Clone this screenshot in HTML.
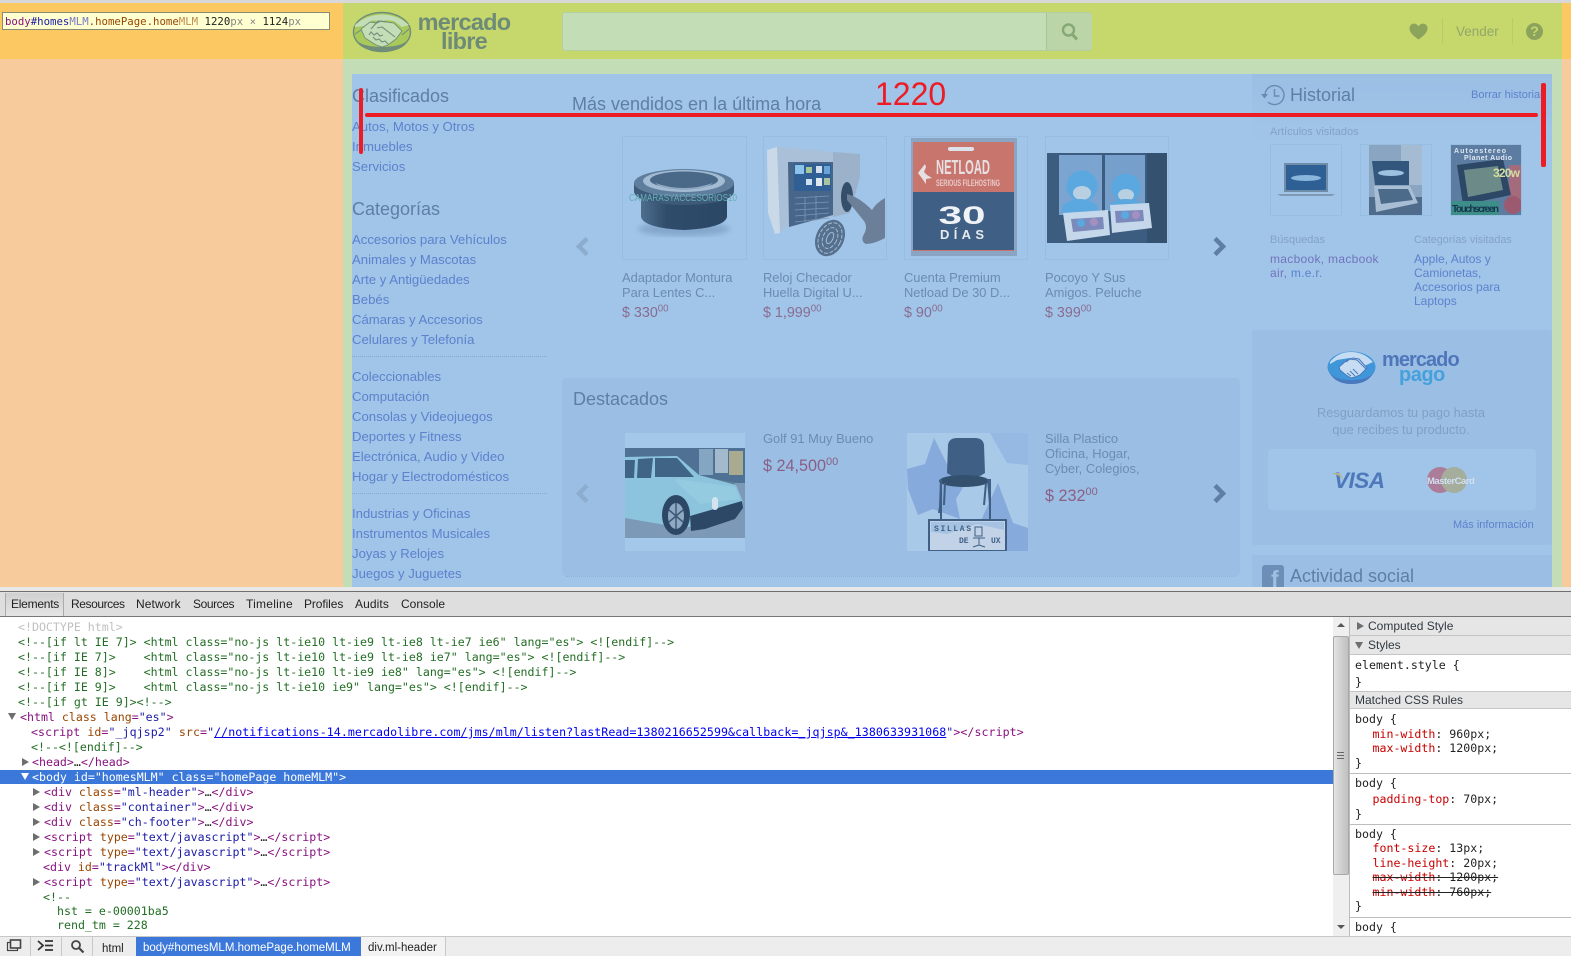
<!DOCTYPE html>
<html lang="es">
<head>
<meta charset="utf-8">
<title>Mercado Libre inspector</title>
<style>
html,body{margin:0;padding:0;width:1571px;height:956px;overflow:hidden;background:#fff}
body{position:relative;font-family:"Liberation Sans",Arial,sans-serif}
div,span.a,svg.a{position:absolute}
.x{white-space:nowrap}
.l{position:absolute;left:352px;margin-top:1px;font-size:13.150px;line-height:20px;color:#5d81cd;white-space:nowrap}
.h{position:absolute;font-size:18px;line-height:22px;color:#5f7ea6;white-space:nowrap}
.box{position:absolute;border:1px solid #97bde0;box-sizing:border-box}
.ti{position:absolute;font-size:12.900px;line-height:15px;color:#6c8bb3;white-space:nowrap}
.pr{position:absolute;font-size:14.300px;line-height:16px;color:#8a6c92;white-space:nowrap}
.pb{position:absolute;font-size:16.200px;line-height:20px;color:#8a5e85;white-space:nowrap}
sup{font-size:.68em;line-height:0;vertical-align:.55em}
.sm{position:absolute;font-size:11px;line-height:13px;color:#84a2c6;white-space:nowrap}
.lk{position:absolute;font-size:12px;line-height:14px;color:#5d81cd;white-space:nowrap}
.code{position:absolute;font-family:"DejaVu Sans Mono","Liberation Mono",monospace;font-size:11.600px;line-height:15px;white-space:pre;color:#222}
.c{color:#236e25}.t{color:#881280}.n{color:#994500}.v{color:#1a1aa6}.g{color:#c0c0c0}
.tab{position:absolute;top:597px;font-size:12px;line-height:15px;color:#222;white-space:nowrap}
.sec{position:absolute;left:1350px;width:221px;background:#e6e6e6;border-bottom:1px solid #c4c4c4;box-sizing:border-box;font-size:12px;color:#303942}
.css{position:absolute;left:1355px;font-family:"DejaVu Sans Mono","Liberation Mono",monospace;font-size:11.600px;line-height:15px;color:#222;white-space:pre}
.i{display:inline-block;width:17.500px}
.r{color:#c80000}
.sep{position:absolute;left:1350px;width:221px;height:1px;background:#bdbdbd}
.tri{position:absolute;width:0;height:0}
.ar{border-top:4px solid transparent;border-bottom:4px solid transparent;border-left:7px solid #6e6e6e}
</style>
</head>
<body>
<!-- page backdrop -->
<div style="left:0;top:0;width:1571px;height:3px;background:#d8d8d8"></div>
<div style="left:0;top:3px;width:343px;height:56px;background:#fbc862"></div>
<div style="left:0;top:59px;width:343px;height:528px;background:#f8cb9d"></div>
<div style="left:343px;top:3px;width:1219px;height:56px;background:#c6d76b"></div>
<div style="left:1562px;top:3px;width:9px;height:56px;background:#fbc862"></div>
<div style="left:1562px;top:59px;width:9px;height:528px;background:#f8cb9d"></div>
<div style="left:343px;top:59px;width:1219px;height:528px;background:#c3deb6"></div>
<div style="left:352px;top:74px;width:1200px;height:513px;background:#a0c5e8"></div>

<!-- inspector tip -->
<div class="x" style="left:2px;top:12px;width:328px;height:18px;box-sizing:border-box;background:#ffffd0;border:1px solid #8a8a78;font-family:'DejaVu Sans Mono',monospace;font-size:10.700px;line-height:17px;padding-left:2px;color:#222"><span style="color:#881280">body</span><span style="color:#1a1aa6">#homes</span><span style="color:#7a7ac0">MLM</span><span style="color:#994500">.homePage.home</span><span style="color:#c08a50">MLM</span> 1220<span style="color:#888">px × </span>1124<span style="color:#888">px</span></div>

<!-- mercado libre logo -->
<svg class="a" style="left:352px;top:10px" width="62" height="44" viewBox="0 0 62 44">
<ellipse cx="30" cy="22" rx="28.500" ry="19.500" fill="#a9c95a" stroke="#6f8d78" stroke-width="1.400"/>
<path d="M1.500 24q3 17 28.500 17.500T58.500 24q-2 13-28.500 13T1.500 24z" fill="#6f8d78"/>
<path d="M3 15Q14 5 30 4.500 46 5 57 15l-7 2-8-6-8-1-6 2-7-2-9 6-9 1z" fill="#c3deb6"/>
<path d="M9 19l9-7 7 1 4-2 6 1 7 1 8 8-6 8-8 6-6 2-6-2-11-7z" fill="#c3deb6" stroke="#6f8d78" stroke-width=".9"/>
<path d="M19 19l7-8 8 1M25 18l5-1 13 10M21 27l3 3 3-1 3 3 3-1 3 3M17 25l2-3 3 3 3-2 3 3 3-1" fill="none" stroke="#6f8d78" stroke-width="1.100"/>
<path d="M3 24l6-4M57 19l-7 6" stroke="#6f8d78" stroke-width="1"/>
</svg>
<div class="x" style="left:417px;top:13px;width:94px;text-align:center;font-size:23.500px;font-weight:bold;line-height:19px;letter-spacing:-.75px;color:#6e8b78">mercado<br>libre</div>

<!-- search -->
<div style="left:562px;top:12px;width:530px;height:39px;box-sizing:border-box;background:#c3deb6;border:1px solid #b3cf9f;border-radius:3px"></div>
<div style="left:1046px;top:13px;width:45px;height:37px;background:#bbd5a8;border-left:1px solid #aac596;border-radius:0 2px 2px 0"></div>
<svg class="a" style="left:1061px;top:22px" width="18" height="19" viewBox="0 0 18 19"><circle cx="7.500" cy="8" r="5.500" fill="none" stroke="#86a875" stroke-width="2.400"/><path d="M11.500 12.500l4.500 5" stroke="#86a875" stroke-width="3"/></svg>

<!-- header right -->
<svg class="a" style="left:1409px;top:23px" width="19" height="17" viewBox="0 0 19 17"><path d="M9.500 16.500C5 13 .5 10 .5 5.200.5 2.500 2.500.6 5 .6c2 0 3.500 1 4.500 2.800C10.500 1.600 12 .6 14 .6c2.500 0 4.500 1.900 4.500 4.600 0 4.800-4.500 7.800-9 11.300z" fill="#8ca35c"/></svg>
<div style="left:1442px;top:18px;width:1px;height:26px;background:#b9cc6c"></div>
<div class="x" style="left:1456px;top:24px;font-size:13.500px;line-height:16px;color:#93a76b">Vender</div>
<div style="left:1512px;top:18px;width:1px;height:26px;background:#b9cc6c"></div>
<div style="left:1526px;top:23px;width:17px;height:17px;border-radius:50%;background:#8ca35c;color:#c6d76b;font-weight:bold;font-size:14px;line-height:17px;text-align:center">?</div>

<!-- left column -->
<div class="h" style="left:352px;top:85px">Clasificados</div>
<div class="l" style="top:116px">Autos, Motos y Otros</div>
<div class="l" style="top:136px">Inmuebles</div>
<div class="l" style="top:156px">Servicios</div>
<div class="h" style="left:352px;top:198px">Categorías</div>
<div class="l" style="top:229px">Accesorios para Vehículos</div>
<div class="l" style="top:249px">Animales y Mascotas</div>
<div class="l" style="top:269px">Arte y Antigüedades</div>
<div class="l" style="top:289px">Bebés</div>
<div class="l" style="top:309px">Cámaras y Accesorios</div>
<div class="l" style="top:329px">Celulares y Telefonía</div>
<div style="left:352px;top:356px;width:195px;border-top:1px dotted #86a9cd"></div>
<div class="l" style="top:366px">Coleccionables</div>
<div class="l" style="top:386px">Computación</div>
<div class="l" style="top:406px">Consolas y Videojuegos</div>
<div class="l" style="top:426px">Deportes y Fitness</div>
<div class="l" style="top:446px">Electrónica, Audio y Video</div>
<div class="l" style="top:466px">Hogar y Electrodomésticos</div>
<div style="left:352px;top:493px;width:195px;border-top:1px dotted #86a9cd"></div>
<div class="l" style="top:503px">Industrias y Oficinas</div>
<div class="l" style="top:523px">Instrumentos Musicales</div>
<div class="l" style="top:543px">Joyas y Relojes</div>
<div class="l" style="top:563px">Juegos y Juguetes</div>

<!-- más vendidos -->
<div class="h" style="left:572px;top:93px;color:#5f7ea6">Más vendidos en la última hora</div>
<div class="box" style="left:622px;top:136px;width:125px;height:124px"></div>
<div class="box" style="left:763px;top:136px;width:124px;height:124px"></div>
<div class="box" style="left:904px;top:136px;width:124px;height:124px"></div>
<div class="box" style="left:1045px;top:136px;width:124px;height:124px"></div>

<!-- lens -->
<svg class="a" style="left:623px;top:137px" width="122" height="122" viewBox="0 0 122 122">
<defs><filter id="bl"><feGaussianBlur stdDeviation="3"/></filter>
<linearGradient id="lg" x1="0" x2="1" y1="0" y2="0"><stop offset="0" stop-color="#4f6e8e"/><stop offset=".3" stop-color="#2f4c6b"/><stop offset="1" stop-color="#2b4766"/></linearGradient></defs>
<ellipse cx="61" cy="92" rx="46" ry="7" fill="#7d9fc4" filter="url(#bl)" opacity=".8"/>
<path d="M18 56v24q3 11 43 13 40-2 43-13V56z" fill="url(#lg)"/>
<path d="M11 46v9q3 12 50 13 47-1 50-13v-9z" fill="#3d5a79"/>
<ellipse cx="61" cy="46" rx="50" ry="14" fill="#5f7e9e"/>
<ellipse cx="61" cy="44" rx="41" ry="11" fill="#a3bbd3"/>
<ellipse cx="61" cy="43" rx="34" ry="8.500" fill="#4a6888"/>
<path d="M32 46q29 10 58 0-6 6-29 7-23-1-29-7z" fill="#8ea8c2"/>
<text x="6" y="64" font-family="Liberation Sans" font-size="10.500" fill="#66aeb6" textLength="108" lengthAdjust="spacingAndGlyphs">CAMARASYACCESORIOS10</text>
</svg>
<!-- clock -->
<svg class="a" style="left:764px;top:137px" width="122" height="122" viewBox="0 0 122 122">
<path d="M3 13l10-3 56 5 27 2v23L86 76 23 90 11 97 4 76z" fill="#a9c0d8"/>
<path d="M3 13l10-3 3 86-5 1-7-21z" fill="#cad9e8"/>
<path d="M69 15l27 2v23L86 76l-17 4z" fill="#9bb2ca"/>
<path d="M24 25h45v53L25 90z" fill="#48668a"/>
<rect x="30" y="27" width="37" height="27" fill="#2f5f95"/>
<rect x="31" y="28" width="9" height="9" fill="#8cc3ea"/><rect x="42" y="30" width="6" height="6" fill="#a7c99a"/><rect x="52" y="29" width="6" height="7" fill="#d5e0ef"/><rect x="60" y="29" width="6" height="8" fill="#6aa5d8"/><rect x="42" y="42" width="6" height="6" fill="#cfe0f0"/><rect x="52" y="41" width="6" height="8" fill="#dfe7ef"/><rect x="60" y="41" width="6" height="7" fill="#a9c5a0"/>
<path d="M31 61l34-2M31 67l34-2M31 73l34-2M31 79l34-3M31 85l34-4M41 60v26M52 59v25" stroke="#7a97b5" stroke-width=".8"/>
<ellipse cx="83" cy="60" rx="6" ry="15" fill="#354f6b"/>
<path d="M83 57Q95 60 108 73 112 66 121 61V101Q110 107 102 107 96 104 100 97 104 90 100 84 92 74 83 63z" fill="#6b7f99"/>
<g transform="rotate(25 66 101)"><ellipse cx="66" cy="101" rx="14" ry="19" fill="#55708e"/><ellipse cx="66" cy="101" rx="11" ry="16" fill="none" stroke="#a3bad2" stroke-width="1" stroke-dasharray="4 1.500"/><ellipse cx="66" cy="101" rx="7" ry="11" fill="none" stroke="#a3bad2" stroke-width="1" stroke-dasharray="4 1.500"/><ellipse cx="66" cy="101" rx="3" ry="6" fill="none" stroke="#a3bad2" stroke-width="1"/></g>
</svg>
<!-- netload -->
<svg class="a" style="left:908px;top:138px" width="112" height="119" viewBox="0 0 112 119">
<rect x="3" y="0" width="106" height="118" fill="#8aa5c3"/>
<rect x="5" y="4" width="101" height="109" fill="#c8756d"/>
<rect x="5" y="54" width="101" height="58" fill="#3f5f85"/>
<rect x="40" y="9" width="26" height="4" rx="2" fill="#dde3ea"/>
<path d="M17 26l-7 9 3 4 5 7v-5l6-1-5-3-3-3 2-5z" fill="#e7e0e2"/>
<text x="28" y="36" font-family="Liberation Sans" font-weight="bold" font-size="20" textLength="54" lengthAdjust="spacingAndGlyphs" fill="#e7e0e2">NETLOAD</text>
<text x="28" y="48" font-family="Liberation Sans" font-weight="bold" font-size="9" textLength="64" lengthAdjust="spacingAndGlyphs" fill="#e7c9c9">SERIOUS FILEHOSTING</text>
<text x="54" y="86" text-anchor="middle" font-family="Liberation Sans" font-weight="bold" font-size="25" fill="#f0f3f6" textLength="47" lengthAdjust="spacingAndGlyphs">30</text>
<text x="54" y="101" text-anchor="middle" font-family="Liberation Sans" font-weight="bold" font-size="13" fill="#e6ebf0" textLength="44">DÍAS</text>
</svg>
<!-- pocoyo -->
<svg class="a" style="left:1047px;top:153px" width="120" height="90" viewBox="0 0 120 90">
<rect width="120" height="90" fill="#3d5d80"/>
<rect x="100" y="0" width="20" height="90" fill="#34516f"/>
<rect x="12" y="2" width="43" height="60" fill="#7ba4d0"/><rect x="58" y="2" width="40" height="56" fill="#769fcb"/>
<circle cx="35" cy="33" r="15.500" fill="#5ba7df"/><circle cx="79" cy="35" r="14.500" fill="#5ba7df"/>
<ellipse cx="35" cy="40" rx="9" ry="7" fill="#b9cfe2"/><ellipse cx="79" cy="42" rx="8" ry="6" fill="#b9cfe2"/>
<ellipse cx="33" cy="57" rx="18" ry="11" fill="#5ba7df"/><ellipse cx="79" cy="55" rx="17" ry="9" fill="#5ba7df"/>
<path d="M16 60l45-3 2 25-43 6z" fill="#c5d7ea"/><path d="M63 52l39-2 3 25-40 5z" fill="#c5d7ea"/>
<path d="M24 66l32-2 1 12-31 3z" fill="#7b89bb"/><path d="M68 58l28-1 1 11-28 2z" fill="#7b89bb"/>
<circle cx="34" cy="70" r="4" fill="#5ba7df"/><circle cx="47" cy="69" r="4" fill="#a58fc0"/><circle cx="78" cy="62" r="4" fill="#5ba7df"/><circle cx="89" cy="62" r="4" fill="#a58fc0"/>
</svg>

<div class="ti" style="left:622px;top:270px">Adaptador Montura<br>Para Lentes C...</div>
<div class="pr" style="left:622px;top:305px">$ 330<sup>00</sup></div>
<div class="ti" style="left:763px;top:270px">Reloj Checador<br>Huella Digital U...</div>
<div class="pr" style="left:763px;top:305px">$ 1,999<sup>00</sup></div>
<div class="ti" style="left:904px;top:270px">Cuenta Premium<br>Netload De 30 D...</div>
<div class="pr" style="left:904px;top:305px">$ 90<sup>00</sup></div>
<div class="ti" style="left:1045px;top:270px">Pocoyo Y Sus<br>Amigos. Peluche</div>
<div class="pr" style="left:1045px;top:305px">$ 399<sup>00</sup></div>

<svg class="a" style="left:575px;top:236px" width="16" height="21" viewBox="0 0 16 21"><path d="M12 2.500L4 10.500l8 8" fill="none" stroke="#8eadce" stroke-width="4.500"/></svg>
<svg class="a" style="left:1211px;top:236px" width="16" height="21" viewBox="0 0 16 21"><path d="M4 2.500l8 8-8 8" fill="none" stroke="#5f7ea6" stroke-width="4.500"/></svg>

<!-- destacados -->
<div style="left:562px;top:378px;width:678px;height:198px;background:#9bbfe4;border-radius:4px"></div>
<div style="left:566px;top:576px;width:670px;border-top:1px dotted #8fb2d6"></div>
<div class="h" style="left:573px;top:388px">Destacados</div>
<div style="left:625px;top:433px;width:120px;height:118px;background:#a3c8ea"></div>
<svg class="a" style="left:625px;top:448px" width="120" height="90" viewBox="0 0 120 90">
<rect width="120" height="90" fill="#4f7193"/>
<rect x="74" y="1" width="14" height="26" fill="#85a6c2"/><rect x="90" y="1" width="13" height="24" fill="#a3bacc"/><rect x="104" y="3" width="14" height="24" fill="#a9aa90"/>
<path d="M70 28l50 8v20l-50-8z" fill="#5d8099"/>
<path d="M0 70h120v20H0z" fill="#7c9ab7"/><path d="M110 35h10v35H90z" fill="#7c9ab7"/>
<path d="M0 9l52-1 22 19 37 10 7 17-1 8-30 12-22 5H52L0 70z" fill="#8bc4dc"/>
<path d="M0 12h10l-1 18H0zM13 11l15-1-2 20H12zM30 10h22l17 19H30z" fill="#3f6486"/>
<path d="M52 31l58 8 5 12-40 5-24-22z" fill="#95cbe0"/>
<path d="M65 68l52-15 1 7-8 11-30 10-14 2z" fill="#2c4866"/>
<ellipse cx="51" cy="67" rx="14" ry="20" fill="#2c4866"/><ellipse cx="51" cy="68" rx="8" ry="13" fill="#90a9c3"/><path d="M51 55v26M44 62l14 12M58 62L44 74" stroke="#3d5a78" stroke-width="1.500"/>
<rect x="87" y="49" width="6" height="13" rx="3" fill="#d5e3ef"/>
</svg>
<div class="ti" style="left:763px;top:431px">Golf 91 Muy Bueno</div>
<div class="pb" style="left:763px;top:456px">$ 24,500<sup>00</sup></div>
<svg class="a" style="left:907px;top:433px" width="121" height="118" viewBox="0 0 121 118">
<rect width="121" height="118" fill="#a9c9e9"/>
<path d="M0 36l18-5 9-26 14 28 30-3-22 36 4 20-27-10-15 6-10-26z" fill="#86aadb"/>
<path d="M83 0h38v32L100 30z" fill="#95b9e3"/>
<path d="M91 50l15 40 15 5v23H60l12-26z" fill="#86aadb"/>
<path d="M41 12q1-7 9-7h18q8 0 9 7l1 28q-8 6-19 6t-19-6z" fill="#3f5f85"/>
<ellipse cx="57" cy="48" rx="25" ry="6" fill="#33506f"/>
<path d="M34 46l-1 28-1 6M81 46l2 26M38 50l-1 22M79 50l-2 22M34 46v46M83 46v46" stroke="#3f5f85" stroke-width="2" fill="none"/>
<rect x="22" y="87" width="77" height="31" fill="#c2d3e8" stroke="#3f5f85" stroke-width="2"/>
<path d="M24 89h73v8L70 91 40 101 24 99z" fill="#a6c2e2"/>
<text x="27" y="98" font-family="Liberation Mono" font-weight="bold" font-size="8" fill="#3f5f85" textLength="37">SILLAS</text>
<text x="52" y="110" font-family="Liberation Mono" font-weight="bold" font-size="8" fill="#3f5f85">DE</text>
<text x="84" y="110" font-family="Liberation Mono" font-weight="bold" font-size="8" fill="#3f5f85">UX</text>
<path d="M68 94h7v9h-7zM66 105h12M72 105v7M66 114l6-2 6 2" stroke="#3f5f85" fill="none"/>
</svg>
<div class="ti" style="left:1045px;top:431px">Silla Plastico<br>Oficina, Hogar,<br>Cyber, Colegios,</div>
<div class="pb" style="left:1045px;top:486px">$ 232<sup>00</sup></div>
<svg class="a" style="left:575px;top:483px" width="16" height="21" viewBox="0 0 16 21"><path d="M12 2.500L4 10.500l8 8" fill="none" stroke="#8eadce" stroke-width="4.500"/></svg>
<svg class="a" style="left:1211px;top:483px" width="16" height="21" viewBox="0 0 16 21"><path d="M4 2.500l8 8-8 8" fill="none" stroke="#5f7ea6" stroke-width="4.500"/></svg>

<!-- historial -->
<div style="left:1252px;top:74px;width:300px;height:70px;background:linear-gradient(#9bbfe4,#a0c5e8)"></div>
<svg class="a" style="left:1261px;top:84px" width="24" height="22" viewBox="0 0 24 22"><path d="M4 11a9.500 9.500 0 1 1 3 7" fill="none" stroke="#6a89b0" stroke-width="1.400"/><path d="M0 10h7l-3.500 4.500z" fill="#6a89b0"/><path d="M13.500 5v7h5" fill="none" stroke="#6a89b0" stroke-width="1.400"/></svg>
<div class="h" style="left:1290px;top:84px">Historial</div>
<div class="lk" style="left:1471px;top:88px;font-size:11px">Borrar historial</div>
<div class="sm" style="left:1270px;top:126px">Artículos visitados</div>
<div class="box" style="left:1270px;top:144px;width:72px;height:72px"></div>
<div class="box" style="left:1360px;top:144px;width:72px;height:72px"></div>
<div class="box" style="left:1450px;top:144px;width:72px;height:72px"></div>
<svg class="a" style="left:1277px;top:163px" width="58" height="35" viewBox="0 0 58 35"><path d="M7 0h44v29H7z" fill="#6f8ca9"/><path d="M9 2h40v25H9z" fill="#2e6096"/><ellipse cx="29" cy="15" rx="15" ry="3" fill="#8ab6dc"/><path d="M0 31h58l-3 2H4z" fill="#7f99b3"/></svg>
<svg class="a" style="left:1369px;top:145px" width="53" height="70" viewBox="0 0 53 70"><rect width="53" height="70" fill="#8aa5c2"/><rect x="0" y="52" width="53" height="18" fill="#4f6c8c"/><rect x="32" y="0" width="21" height="40" fill="#a4bbd2"/><path d="M3 16h37v24H6z" fill="#33577c"/><ellipse cx="22" cy="28" rx="13" ry="3" fill="#9dc1e0"/><path d="M5 41h36l8 17-42 9z" fill="#a8bed4"/><path d="M9 44h30l5 11-32 4z" fill="#4c6b8a"/></svg>
<svg class="a" style="left:1451px;top:145px" width="70" height="70" viewBox="0 0 70 70"><rect width="70" height="70" fill="#5c7da1"/><path d="M58 20h12v45H58z" fill="#a46b7c"/><path d="M6 20l46-6 8 36-48 10z" fill="#2d4866"/><path d="M13 25l34-4 5 24-35 7z" fill="#6c8b88"/><text x="3" y="8" font-family="Liberation Sans" font-weight="bold" font-size="7" fill="#dfe8f2" textLength="52">Autoestereo</text><text x="13" y="15" font-family="Liberation Sans" font-weight="bold" font-size="7" fill="#dfe8f2" textLength="48">Planet Audio</text><text x="42" y="32" font-family="Liberation Sans" font-weight="bold" font-size="12" fill="#d4dca0" textLength="27">320w</text><rect x="0" y="56" width="48" height="14" fill="#3d8e88"/><text x="1" y="67" font-family="Liberation Sans" font-weight="bold" font-size="10" fill="#16354f" textLength="47">Touchscreen</text><circle cx="62" cy="60" r="9" fill="#9c5a70"/></svg>
<div class="sm" style="left:1270px;top:234px">Búsquedas</div>
<div class="sm" style="left:1414px;top:234px;font-size:10.800px">Categorías visitadas</div>
<div class="lk" style="left:1270px;top:252px;color:#7273bd;letter-spacing:.3px">macbook, macbook<br>air, <span style="color:#5d81cd">m.e.r.</span></div>
<div class="lk" style="left:1414px;top:252px">Apple, Autos y<br>Camionetas,<br>Accesorios para<br>Laptops</div>

<!-- mercado pago -->
<div style="left:1252px;top:330px;width:300px;height:215px;background:#9bbfe4;border-radius:3px"></div>
<svg class="a" style="left:1327px;top:349px" width="50" height="36" viewBox="0 0 50 36">
<ellipse cx="24.500" cy="18" rx="24" ry="15.500" fill="#3f97da"/>
<path d="M1 20q5 15 23.500 15T48 20q-3 11-23.500 11T1 20z" fill="#4a78be"/>
<path d="M3 13Q11 3 24 3t22 10l-9 4-6-6-8-2-7 1-6 1-7 4z" fill="#c5dcf2"/>
<path d="M12 18l8-7 6-2 6 1 8 9-7 7-5 2-4 1-5-3-6-5z" fill="#c5dcf2" stroke="#4a78be"/>
<path d="M19 13l4-3 7 1 9 9M20 24l4 3M23 22l5 5M26 20l5 5" fill="none" stroke="#4a78be"/>
</svg>
<div class="x" style="left:1382px;top:350px;font-size:20px;font-weight:bold;line-height:20px;letter-spacing:-.95px;color:#4f76ba">mercado</div>
<div class="x" style="left:1399px;top:365px;font-size:20px;font-weight:bold;line-height:20px;letter-spacing:-.5px;color:#46a0dc">pago</div>
<div class="x" style="left:1252px;top:404px;width:300px;padding-right:2px;box-sizing:border-box;text-align:center;font-size:12.800px;line-height:17px;color:#819fc3">Resguardamos tu pago hasta<br>que recibes tu producto.</div>
<div style="left:1268px;top:449px;width:268px;height:61px;background:#a0c5e8;border-radius:4px"></div>
<div class="x" style="left:1334px;top:468px;font-size:22.500px;font-weight:bold;font-style:italic;line-height:26px;letter-spacing:-.5px;color:#4f78ba">VISA</div>
<svg class="a" style="left:1331px;top:472px" width="14" height="8" viewBox="0 0 14 8"><path d="M0 1h9l3 7Q7 2 0 1z" fill="#b3b08e"/></svg>
<div style="left:1427px;top:467px;width:26px;height:26px;border-radius:50%;background:#ab7d98"></div>
<div style="left:1441px;top:467px;width:26px;height:26px;border-radius:50%;background:#a5ad9d"></div>
<div class="x" style="left:1427px;top:476px;width:41px;text-align:center;font-size:9.500px;line-height:12px;font-weight:bold;letter-spacing:-.5px;color:#d0e0f2">MasterCard</div>
<div class="lk" style="left:1453px;top:518px;font-size:11px">Más información</div>

<!-- social -->
<div style="left:1252px;top:555px;width:300px;height:32px;background:#9bbfe4"></div>
<div style="left:1262px;top:565px;width:22px;height:22px;background:#6c8fb8;border-radius:3px 3px 0 0"></div>
<div class="x" style="left:1271px;top:567px;font-size:23px;font-weight:bold;line-height:24px;color:#a0c0e2;height:20px;overflow:hidden">f</div>
<div class="h" style="left:1290px;top:565px">Actividad social</div>

<!-- annotation -->
<div style="left:365px;top:113px;width:1173px;height:4px;background:#ed1c24;border-radius:2px"></div>
<div style="left:359px;top:88px;width:4px;height:66px;background:#ed1c24;border-radius:2px"></div>
<div style="left:1541px;top:83px;width:5px;height:84px;background:#ed1c24;border-radius:2px"></div>
<div class="x" style="left:875px;top:75px;font-size:32px;line-height:38px;color:#ed1c24">1220</div>

<!-- devtools -->
<div style="left:0;top:587px;width:1571px;height:369px;background:#fff"></div>
<div style="left:0;top:587px;width:1571px;height:4px;background:#e8e8e8"></div>
<div style="left:0;top:591px;width:1571px;height:1px;background:#6e6e6e"></div>
<div style="left:0;top:592px;width:1571px;height:24px;background:#dedede"></div>
<div style="left:0;top:616px;width:1571px;height:1px;background:#777"></div>
<div style="left:5px;top:593px;width:59px;height:23px;background:linear-gradient(#d0d0d0,#e4e4e4);border-left:1px solid #aaa;border-right:1px solid #aaa;box-sizing:border-box"></div>
<div class="tab" style="left:11px;letter-spacing:-.25px">Elements</div>
<div class="tab" style="left:71px;letter-spacing:-.42px">Resources</div>
<div class="tab" style="left:136px;letter-spacing:.1px">Network</div>
<div class="tab" style="left:193px;letter-spacing:-.42px">Sources</div>
<div class="tab" style="left:246px;letter-spacing:.25px">Timeline</div>
<div class="tab" style="left:304px;letter-spacing:-.1px">Profiles</div>
<div class="tab" style="left:355px;letter-spacing:.1px">Audits</div>
<div class="tab" style="left:401px">Console</div>

<div style="left:0;top:770px;width:1333px;height:14px;background:#3b78da"></div>

<div class="code" style="left:18px;top:620px"><span class="g">&lt;!DOCTYPE html&gt;</span></div>
<div class="code c" style="left:18px;top:635px">&lt;!--[if lt IE 7]&gt; &lt;html class="no-js lt-ie10 lt-ie9 lt-ie8 lt-ie7 ie6" lang="es"&gt; &lt;![endif]--&gt;</div>
<div class="code c" style="left:18px;top:650px">&lt;!--[if IE 7]&gt;    &lt;html class="no-js lt-ie10 lt-ie9 lt-ie8 ie7" lang="es"&gt; &lt;![endif]--&gt;</div>
<div class="code c" style="left:18px;top:665px">&lt;!--[if IE 8]&gt;    &lt;html class="no-js lt-ie10 lt-ie9 ie8" lang="es"&gt; &lt;![endif]--&gt;</div>
<div class="code c" style="left:18px;top:680px">&lt;!--[if IE 9]&gt;    &lt;html class="no-js lt-ie10 ie9" lang="es"&gt; &lt;![endif]--&gt;</div>
<div class="code c" style="left:18px;top:695px">&lt;!--[if gt IE 9]&gt;&lt;!--&gt;</div>
<div class="tri" style="left:8px;top:713px;border-left:4px solid transparent;border-right:4px solid transparent;border-top:7px solid #6e6e6e"></div>
<div class="code" style="left:20px;top:710px"><span class="t">&lt;html</span> <span class="n">class</span> <span class="n">lang</span><span class="t">=</span><span class="v">"es"</span><span class="t">&gt;</span></div>
<div class="code" style="left:31px;top:725px;letter-spacing:.06px"><span class="t">&lt;script</span> <span class="n">id</span><span class="t">=</span><span class="v">"_jqjsp2"</span> <span class="n">src</span><span class="t">=</span><span class="v">"<u style="color:#00e">//notifications-14.mercadolibre.com/jms/mlm/listen?lastRead=1380216652599&amp;callback=_jqjsp&amp;_1380633931068</u>"</span><span class="t">&gt;&lt;/script&gt;</span></div>
<div class="code c" style="left:31px;top:740px">&lt;!--&lt;![endif]--&gt;</div>
<div class="tri ar" style="left:22px;top:758px"></div>
<div class="code" style="left:32px;top:755px"><span class="t">&lt;head&gt;</span>…<span class="t">&lt;/head&gt;</span></div>
<div class="tri" style="left:21px;top:773px;border-left:4px solid transparent;border-right:4px solid transparent;border-top:7px solid #fff"></div>
<div class="code" style="left:32px;top:770px;color:#fff">&lt;body id="homesMLM" class="homePage homeMLM"&gt;</div>
<div class="tri ar" style="left:33px;top:788px"></div>
<div class="code" style="left:44px;top:785px"><span class="t">&lt;div</span> <span class="n">class</span><span class="t">=</span><span class="v">"ml-header"</span><span class="t">&gt;</span>…<span class="t">&lt;/div&gt;</span></div>
<div class="tri ar" style="left:33px;top:803px"></div>
<div class="code" style="left:44px;top:800px"><span class="t">&lt;div</span> <span class="n">class</span><span class="t">=</span><span class="v">"container"</span><span class="t">&gt;</span>…<span class="t">&lt;/div&gt;</span></div>
<div class="tri ar" style="left:33px;top:818px"></div>
<div class="code" style="left:44px;top:815px"><span class="t">&lt;div</span> <span class="n">class</span><span class="t">=</span><span class="v">"ch-footer"</span><span class="t">&gt;</span>…<span class="t">&lt;/div&gt;</span></div>
<div class="tri ar" style="left:33px;top:833px"></div>
<div class="code" style="left:44px;top:830px"><span class="t">&lt;script</span> <span class="n">type</span><span class="t">=</span><span class="v">"text/javascript"</span><span class="t">&gt;</span>…<span class="t">&lt;/script&gt;</span></div>
<div class="tri ar" style="left:33px;top:848px"></div>
<div class="code" style="left:44px;top:845px"><span class="t">&lt;script</span> <span class="n">type</span><span class="t">=</span><span class="v">"text/javascript"</span><span class="t">&gt;</span>…<span class="t">&lt;/script&gt;</span></div>
<div class="code" style="left:43px;top:860px"><span class="t">&lt;div</span> <span class="n">id</span><span class="t">=</span><span class="v">"trackMl"</span><span class="t">&gt;&lt;/div&gt;</span></div>
<div class="tri ar" style="left:33px;top:878px"></div>
<div class="code" style="left:44px;top:875px"><span class="t">&lt;script</span> <span class="n">type</span><span class="t">=</span><span class="v">"text/javascript"</span><span class="t">&gt;</span>…<span class="t">&lt;/script&gt;</span></div>
<div class="code c" style="left:43px;top:890px">&lt;!--</div>
<div class="code c" style="left:57px;top:904px">hst = e-00001ba5</div>
<div class="code c" style="left:57px;top:918px">rend_tm = 228</div>

<!-- scrollbar -->
<div style="left:1333px;top:617px;width:17px;height:319px;background:#efefef;border-right:1px solid #bbb;box-sizing:border-box"></div>
<div class="tri" style="left:1337px;top:623px;border-left:4px solid transparent;border-right:4px solid transparent;border-bottom:4px solid #555"></div>
<div style="left:1333px;top:636px;width:16px;height:239px;box-sizing:border-box;background:linear-gradient(90deg,#e4e4e4,#d0d0d0,#c0c0c0);border:1px solid #a8a8a8;border-radius:2px"></div>
<div style="left:1337px;top:752px;width:7px;height:7px;border-top:1px solid #666;border-bottom:1px solid #666;box-sizing:border-box"></div>
<div style="left:1337px;top:755px;width:7px;height:1px;background:#666"></div>
<div class="tri" style="left:1337px;top:925px;border-left:4px solid transparent;border-right:4px solid transparent;border-top:4px solid #555"></div>

<!-- styles pane -->
<div class="sec" style="top:617px;height:19px;line-height:18px;padding-left:18px">Computed Style</div>
<div class="tri ar" style="left:1357px;top:622px"></div>
<div class="sec" style="top:636px;height:19px;line-height:18px;padding-left:18px">Styles</div>
<div class="tri" style="left:1355px;top:642px;border-left:4px solid transparent;border-right:4px solid transparent;border-top:7px solid #6e6e6e"></div>
<div class="css" style="top:657px;line-height:16.500px">element.style {
}</div>
<div class="sec" style="top:691px;height:18px;line-height:16px;padding-left:5px;border-top:1px solid #c4c4c4">Matched CSS Rules</div>
<div class="css" style="top:712px;line-height:14.700px">body {
<span class="i"></span><span class="r">min-width</span>: 960px;
<span class="i"></span><span class="r">max-width</span>: 1200px;
}</div>
<div class="sep" style="top:773px"></div>
<div class="css" style="top:776px;line-height:15.500px">body {
<span class="i"></span><span class="r">padding-top</span>: 70px;
}</div>
<div class="sep" style="top:824px"></div>
<div class="css" style="top:827px;line-height:14.400px">body {
<span class="i"></span><span class="r">font-size</span>: 13px;
<span class="i"></span><span class="r">line-height</span>: 20px;
<span class="i"></span><s><span class="r">max-width</span>: 1200px;</s>
<span class="i"></span><s><span class="r">min-width</span>: 760px;</s>
}</div>
<div class="sep" style="top:917px"></div>
<div class="css" style="top:920px">body {</div>

<!-- breadcrumb bar -->
<div style="left:0;top:936px;width:1571px;height:20px;background:#ededed;border-top:1px solid #c8c8c8;box-sizing:border-box"></div>
<svg class="a" style="left:6px;top:939px" width="18" height="15" viewBox="0 0 18 15"><rect x="1.500" y="3.500" width="10" height="8" fill="none" stroke="#444" stroke-width="1.200"/><rect x="4.500" y="1" width="10" height="8" fill="#ededed" stroke="#444" stroke-width="1.600"/></svg>
<div style="left:30px;top:937px;width:1px;height:19px;background:#c8c8c8"></div>
<svg class="a" style="left:37px;top:939px" width="17" height="14" viewBox="0 0 17 14"><path d="M1 2l5 4.500L1 11" fill="none" stroke="#333" stroke-width="1.800"/><path d="M8 2h8M8 6.500h8M8 11h8" stroke="#333" stroke-width="1.800"/></svg>
<div style="left:61px;top:937px;width:1px;height:19px;background:#c8c8c8"></div>
<svg class="a" style="left:70px;top:939px" width="15" height="15" viewBox="0 0 15 15"><circle cx="6" cy="6" r="4" fill="none" stroke="#444" stroke-width="1.800"/><path d="M9 9l4.500 4.500" stroke="#444" stroke-width="2.200"/></svg>
<div style="left:92px;top:937px;width:1px;height:19px;background:#c8c8c8"></div>
<div class="x" style="left:102px;top:942px;font-size:11.500px;line-height:14px;color:#222">html</div>
<div class="x" style="left:136px;top:937px;width:225px;height:19px;background:#3b78da;color:#fff;font-size:11.500px;line-height:22px;padding-left:7px;box-sizing:border-box;overflow:hidden">body#homesMLM.homePage.homeMLM</div>
<div class="x" style="left:361px;top:937px;width:85px;height:19px;background:#f3f3f3;border-right:1px solid #c8c8c8;box-sizing:border-box;color:#222;font-size:11.500px;line-height:22px;padding-left:7px;overflow:hidden">div.ml-header</div>
</body>
</html>
